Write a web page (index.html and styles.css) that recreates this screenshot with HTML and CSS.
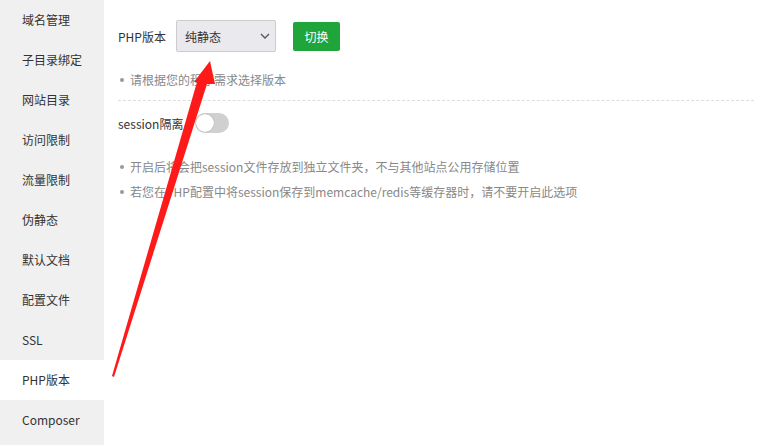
FILE: index.html
```html
<!DOCTYPE html>
<html lang="zh-CN">
<head>
    <meta charset="UTF-8">
    <title>PHP版本</title>
    <link rel="stylesheet" href="styles.css">
</head>
<body>

<div class="site-panel">
    <ul class="side-menu">
        <li>域名管理</li>
        <li>子目录绑定</li>
        <li>网站目录</li>
        <li>访问限制</li>
        <li>流量限制</li>
        <li>伪静态</li>
        <li>默认文档</li>
        <li>配置文件</li>
        <li>SSL</li>
        <li class="active">PHP版本</li>
        <li>Composer</li>
    </ul>

    <div class="main">
        <div class="php-row">
            <span class="label">PHP版本</span>
            <div class="select-box">
                <span>纯静态</span>
                <svg width="10" height="6" viewBox="0 0 10 6"><path d="M1 1l4 4 4-4" fill="none" stroke="#555" stroke-width="1.3"/></svg>
            </div>
            <button class="btn-green">切换</button>
        </div>
        <ul class="help">
            <li>请根据您的程序需求选择版本</li>
        </ul>
        <div class="line"></div>

        <div class="session-row">
            <span class="label">session隔离</span>
            <span class="switch"><i></i></span>
        </div>
        <ul class="help help-session">
            <li>开启后将会把session文件存放到独立文件夹，不与其他站点公用存储位置</li>
            <li>若您在PHP配置中将session保存到memcache/redis等缓存器时，请不要开启此选项</li>
        </ul>
    </div>

    <!-- 标注箭头 -->
    <svg class="arrow" width="758" height="445" viewBox="0 0 758 445">
        <polygon points="210,61 215,84 207,84 114,377 112,376 197,82 194,82" fill="#ff1a1a"/>
    </svg>
</div>

</body>
</html>
```

FILE: styles.css
```css
body {
    margin: 0;
    padding: 0;
    background: #fff;
    font-family: "Microsoft YaHei", "Noto Sans CJK SC", sans-serif;
    font-size: 12px;
    color: #333;
}

.site-panel {
    position: relative;
    display: flex;
    width: 758px;
    height: 445px;
    overflow: hidden;
}

.side-menu {
    list-style: none;
    margin: 0;
    padding: 0;
    width: 104px;
    background-color: #f0f0f0;
    flex-shrink: 0;
}

.side-menu li {
    height: 40px;
    line-height: 40px;
    padding-left: 22px;
    color: #333;
}

.side-menu li.active {
    background-color: #fff;
}

.main {
    flex: 1;
    padding: 20px 4px 0 14px;
}

.php-row {
    display: flex;
    align-items: center;
    height: 32px;
}

.php-row .label {
    width: 58px;
}

.select-box {
    box-sizing: border-box;
    width: 100px;
    height: 32px;
    border: 1px solid #ccc;
    border-radius: 2px;
    background-color: #e9e9ee;
    display: flex;
    align-items: center;
    justify-content: space-between;
    padding: 0 5px 0 8px;
    color: #333;
}

.btn-green {
    margin-left: 17px;
    height: 29px;
    width: 47px;
    border: none;
    border-radius: 2px;
    background-color: #20a53a;
    color: #fff;
    font-family: inherit;
    font-size: 12px;
    padding: 0;
}

.help {
    list-style: none;
    margin: 0;
    padding: 0;
    color: #888;
}

.help li {
    position: relative;
    padding-left: 12px;
    height: 25px;
    line-height: 25px;
}

.help li::before {
    content: "";
    position: absolute;
    left: 2px;
    top: 11px;
    width: 4px;
    height: 4px;
    border-radius: 50%;
    background-color: #999;
}

.php-row + .help {
    margin-top: 15px;
}

.line {
    border-top: 1px dashed #ddd;
    margin-top: 8px;
}

.session-row {
    display: flex;
    align-items: center;
    margin-top: 11px;
    height: 22px;
}

.switch {
    position: relative;
    display: inline-block;
    width: 34px;
    height: 20px;
    border-radius: 10px;
    background-color: #d0d0d0;
    margin-left: 12px;
}

.switch i {
    position: absolute;
    left: 1px;
    top: 1px;
    width: 18px;
    height: 18px;
    border-radius: 50%;
    background-color: #fff;
    box-shadow: 0 0 1px rgba(0, 0, 0, 0.4);
}

.help-session {
    margin-top: 20px;
}

.arrow {
    position: absolute;
    left: 0;
    top: 0;
    pointer-events: none;
}
```
